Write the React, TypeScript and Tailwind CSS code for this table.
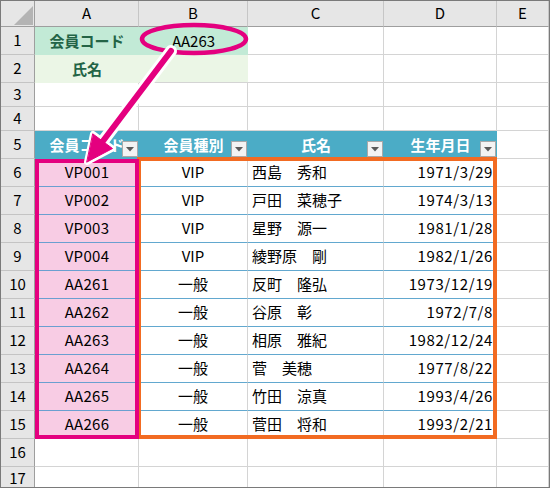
import React from "react";

const COLS = "grid grid-cols-[34px_104px_109px_136px_113px_1fr]";

const data = [
  ["VP001", "VIP", "西島　秀和", "1971/3/29"],
  ["VP002", "VIP", "戸田　菜穂子", "1974/3/13"],
  ["VP003", "VIP", "星野　源一", "1981/1/28"],
  ["VP004", "VIP", "綾野原　剛", "1982/1/26"],
  ["AA261", "一般", "反町　隆弘", "1973/12/19"],
  ["AA262", "一般", "谷原　彰", "1972/7/8"],
  ["AA263", "一般", "相原　雅紀", "1982/12/24"],
  ["AA264", "一般", "菅　美穂", "1977/8/22"],
  ["AA265", "一般", "竹田　涼真", "1993/4/26"],
  ["AA266", "一般", "菅田　将和", "1993/2/21"],
];

const RowHead = ({ n }: { n: number | string }) => (
  <div className="flex items-center justify-center bg-[#e6e6e6] border-r border-r-[#9e9e9e] border-b border-b-[#c4c4c4] text-[15px] text-black">
    {n}
  </div>
);

const Blank = ({ extra = "" }: { extra?: string }) => (
  <div className={`border-r border-b border-[#d4d4d4] ${extra}`} />
);

const FilterBtn = () => (
  <div className="absolute right-[1px] bottom-[2px] w-[16px] h-[16px] bg-[#f3f3f3] border border-[#a9a9a9] flex items-center justify-center">
    <svg width="8" height="5" viewBox="0 0 8 5">
      <path d="M0 0 L8 0 L4 4.5 Z" fill="#5a5a5a" />
    </svg>
  </div>
);

const HeadCell = ({ label }: { label: string }) => (
  <div className="relative flex items-center justify-center bg-[#4bacc6] text-white font-bold text-[15px]">
    {label}
    <FilterBtn />
  </div>
);

export default function App() {
  return (
    <div className="relative w-[550px] h-[488px] overflow-hidden bg-white border border-[#7a7a7a] font-['Noto_Sans_CJK_JP',sans-serif] text-black">
      {/* column header */}
      <div className={`${COLS} h-[26px]`}>
        <div className="relative bg-[#e6e6e6] border-r border-r-[#9e9e9e] border-b border-b-[#9e9e9e]">
          <svg className="absolute left-[13px] top-[5px]" width="19" height="19" viewBox="0 0 19 19">
            <path d="M19 0 L19 19 L0 19 Z" fill="#b4b4b4" />
          </svg>
        </div>
        {["A", "B", "C", "D", "E"].map((c) => (
          <div
            key={c}
            className="flex items-center justify-center bg-[#e6e6e6] border-r border-r-[#c6c6c6] border-b border-b-[#9e9e9e] text-[15px]"
          >
            {c}
          </div>
        ))}
      </div>

      {/* row 1 */}
      <div className={`${COLS} h-[28px]`}>
        <RowHead n={1} />
        <div className="flex items-center justify-center bg-[#c2ead6] text-[#236446] font-bold text-[15px]">
          会員コード
        </div>
        <div className="flex items-center justify-center bg-[#c2ead6] text-[15px]">AA263</div>
        <Blank />
        <Blank />
        <Blank />
      </div>

      {/* row 2 */}
      <div className={`${COLS} h-[28px]`}>
        <RowHead n={2} />
        <div className="flex items-center justify-center bg-[#ebf6e6] text-[#236446] font-bold text-[15px]">
          氏名
        </div>
        <div className="bg-[#ebf6e6] border-b border-b-[#d4d4d4]" />
        <Blank />
        <Blank />
        <Blank />
      </div>

      {[3, 4].map((n) => (
        <div key={n} className={`${COLS} h-[24px]`}>
          <RowHead n={n} />
          <Blank />
          <Blank />
          <Blank />
          <Blank />
          <Blank />
        </div>
      ))}

      {/* row 5 - table header */}
      <div className={`${COLS} h-[28px]`}>
        <RowHead n={5} />
        <HeadCell label="会員コード" />
        <HeadCell label="会員種別" />
        <HeadCell label="氏名" />
        <HeadCell label="生年月日" />
        <Blank />
      </div>

      {data.map((r, i) => (
        <div key={r[0]} className={`${COLS} h-[28px]`}>
          <RowHead n={i + 6} />
          <div className="flex items-center justify-center bg-[#f8cce4] border-b border-b-[#6a9fd0] text-[15px] tracking-[0.3px]">
            {r[0]}
          </div>
          <div className="flex items-center justify-center border-r border-r-[#d4d4d4] border-b border-b-[#62a8cf] text-[15px]">
            {r[1]}
          </div>
          <div className="flex items-center pl-[4px] border-r border-r-[#d4d4d4] border-b border-b-[#62a8cf] text-[15px]">
            {r[2]}
          </div>
          <div className="flex items-center justify-end pr-[4px] border-b border-b-[#62a8cf] text-[15px] tracking-[0.6px]">
            {r[3]}
          </div>
          <Blank />
        </div>
      ))}

      <div className={`${COLS} h-[28px]`}>
        <RowHead n={16} />
        <Blank />
        <Blank />
        <Blank />
        <Blank />
        <Blank />
      </div>
      <div className={`${COLS} h-[20px]`}>
        <RowHead n={17} />
        <Blank />
        <Blank />
        <Blank />
        <Blank />
        <Blank />
      </div>

      {/* annotations */}
      <svg
        className="absolute left-[-1px] top-[-1px] pointer-events-none"
        width="550"
        height="488"
        viewBox="0 0 550 488"
      >
        <rect x="139" y="159" width="356" height="278" fill="none" stroke="#f26b22" strokeWidth="4" />
        <rect x="37" y="161" width="100" height="276" fill="none" stroke="#e4007f" strokeWidth="4" />
        <ellipse cx="194" cy="39" rx="52" ry="14" fill="none" stroke="#e4007f" strokeWidth="4.5" />
        <g strokeLinecap="round" strokeLinejoin="round">
          <line x1="171" y1="51" x2="103" y2="141" stroke="#fff" strokeWidth="12" />
          <polygon points="87,162 112.5,148.5 93,134" fill="#fff" stroke="#fff" strokeWidth="6" />
          <line x1="171" y1="51" x2="103" y2="141" stroke="#e4007f" strokeWidth="6" />
          <polygon points="87,162 112.5,148.5 93,134" fill="#e4007f" stroke="#e4007f" strokeWidth="1" />
        </g>
      </svg>
    </div>
  );
}
